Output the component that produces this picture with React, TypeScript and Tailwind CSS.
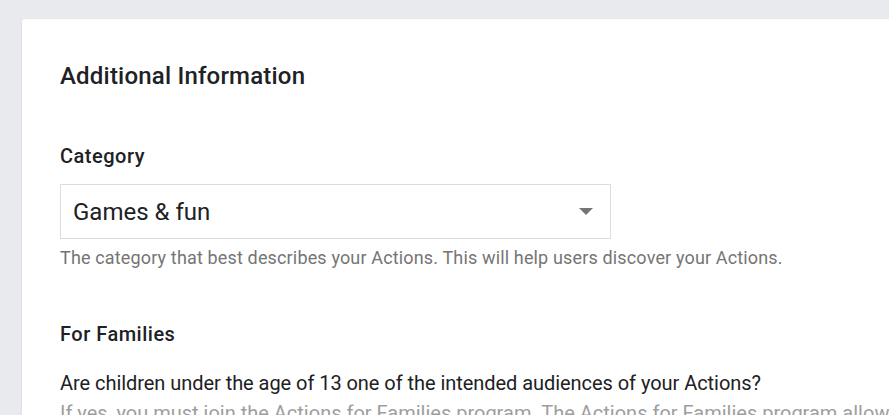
export default function App() {
  return (
    <div className="h-[415px] w-[889px] overflow-hidden bg-[#e8eaed] pl-[22px] pt-[19px]" style={{ fontFamily: "Roboto, 'Liberation Sans', sans-serif" }}>
      <div className="h-[500px] w-[900px] rounded-tl-[3px] bg-white px-[38px] pt-[43px] shadow-[0_1px_2px_rgba(60,64,67,0.2)]">
        <h2 className="text-[24px] leading-[28px] font-medium tracking-[0.2px] text-[#202124]">Additional Information</h2>

        <div className="mt-[54px]">
          <div className="text-[20px] leading-[24px] font-medium tracking-[0.5px] text-[#202124]">Category</div>
          <div className="mt-[16px] flex h-[55px] w-[551px] items-center justify-between border border-[#dadce0] pl-[12px] pr-[16px]">
            <span className="text-[24px] text-[#202124]">Games &amp; fun</span>
            <svg width="16" height="8" viewBox="0 0 16 8">
              <path d="M1 0 L15 0 L8 7 Z" fill="#757575" />
            </svg>
          </div>
          <p className="mt-[8px] text-[18px] leading-[22px] tracking-[0.15px] text-[#757575]">
            The category that best describes your Actions. This will help users discover your Actions.
          </p>
        </div>

        <div className="mt-[53px]">
          <div className="text-[20px] leading-[24px] font-medium tracking-[0.5px] text-[#202124]">For Families</div>
          <p className="mt-[25px] text-[20px] leading-[24px] tracking-[-0.05px] text-[#202124]">
            Are children under the age of 13 one of the intended audiences of your Actions?
          </p>
          <p className="mt-[6px] whitespace-nowrap text-[20px] leading-[24px] text-[#9e9e9e]">
            If yes, you must join the Actions for Families program. The Actions for Families program allows
          </p>
        </div>
      </div>
    </div>
  );
}
